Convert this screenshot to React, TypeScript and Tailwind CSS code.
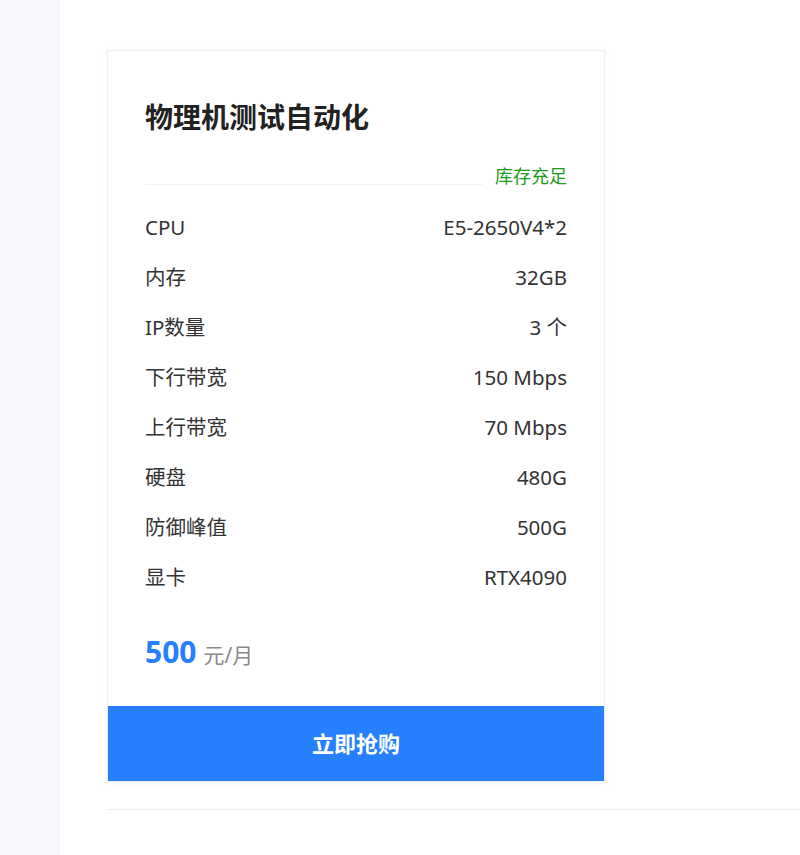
const specs = [
  { label: "CPU", value: "E5-2650V4*2" },
  { label: "内存", value: "32GB" },
  { label: "IP数量", value: "3 个" },
  { label: "下行带宽", value: "150 Mbps" },
  { label: "上行带宽", value: "70 Mbps" },
  { label: "硬盘", value: "480G" },
  { label: "防御峰值", value: "500G" },
  { label: "显卡", value: "RTX4090" },
]

export default function App() {
  return (
    <div
      className="flex min-h-[855px] w-[800px] bg-white"
      style={{ fontFamily: '"Noto Sans", "Noto Sans CJK SC", sans-serif' }}
    >
      <div className="w-[60px] shrink-0 bg-[#f5f7fa]" />

      <main className="flex-1 pt-[50px] pl-[47px]">
        <div className="w-[498px] border border-[#ebeef5] bg-white shadow-[0_2px_12px_rgba(0,0,0,0.03)]">
          <div className="px-[37px] pt-[46px]">
            <h2 className="text-[28px] font-bold leading-[40px] text-[#222]">
              物理机测试自动化
            </h2>

            <div className="mt-[28px] flex items-end">
              <div className="flex-1 border-b border-[#f2f2f2]" />
              <span className="relative top-[1px] pl-3 text-[18px] leading-[20px] text-[#1e9a1e]">
                库存充足
              </span>
            </div>

            <div className="mt-[17px]">
              {specs.map((s) => (
                <div
                  key={s.label}
                  className="flex h-[50px] items-center justify-between text-[20.5px] text-[#333]"
                >
                  <span>{s.label}</span>
                  <span>{s.value}</span>
                </div>
              ))}
            </div>

            <div className="flex items-baseline gap-[7px] pt-[30px] pb-[34px]">
              <span className="text-[30px] font-bold leading-[40px] text-[#2680fe]">500</span>
              <span className="text-[21px] text-[#888]">元/月</span>
            </div>
          </div>

          <button className="flex h-[75px] w-full items-center justify-center bg-[#2680fe] text-[22px] font-bold text-white">
            立即抢购
          </button>
        </div>

        <div className="mt-[27px] border-t border-[#eeeeee]" />
      </main>
    </div>
  )
}
